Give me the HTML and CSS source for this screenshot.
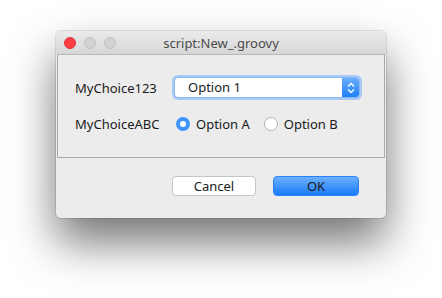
FILE: index.html
```html
<!DOCTYPE html>
<html lang="en">
<head>
  <meta charset="UTF-8">
  <title>script:New_.groovy</title>
  <link rel="stylesheet" href="styles.css">
</head>
<body>

  <div class="window">
    <div class="titlebar">
      <div class="lights">
        <span class="light red"></span>
        <span class="light"></span>
        <span class="light"></span>
      </div>
      <div class="title">script:New_.groovy</div>
    </div>

    <div class="panel">
      <div class="label">MyChoice123</div>
      <div class="combo">
        <span class="combo-text">Option 1</span>
        <span class="combo-arrows">
          <svg width="10" height="14" viewBox="0 0 10 14">
            <path d="M2 5.5 L5 2.5 L8 5.5 M2 8.5 L5 11.5 L8 8.5" fill="none" stroke="#fff" stroke-width="1.4"/>
          </svg>
        </span>
      </div>

      <div class="label">MyChoiceABC</div>
      <div class="radios">
        <label class="radio"><span class="dot on"></span>Option A</label>
        <label class="radio"><span class="dot"></span>Option B</label>
      </div>
    </div>

    <div class="buttons">
      <button class="btn">Cancel</button>
      <button class="btn ok">OK</button>
    </div>
  </div>

</body>
</html>
```

FILE: styles.css
```css
html, body { height: 100%; }
body { margin: 0; padding-top: 31px; box-sizing: border-box; background: #fff; font-family: "Noto Sans", "DejaVu Sans", sans-serif; font-size: 13px; color: #1a1a1a; }

.window {
  width: 330px; height: 187px; margin-left: 56px;
  background: #ececec; border-radius: 5px;
  box-shadow: 0 0 0 1px rgba(0,0,0,0.1), 0 24px 46px rgba(0,0,0,0.55);
  display: flex; flex-direction: column; overflow: hidden;
}

.titlebar {
  height: 23px; position: relative;
  background: linear-gradient(#ebebeb, #d6d6d6);
  display: flex; align-items: center; justify-content: center;
}
.lights { position: absolute; left: 8px; top: 6px; display: flex; gap: 8px; }
.light { width: 12px; height: 12px; border-radius: 50%; background: #d3d3d3; border: 0.5px solid #c4c4c4; box-sizing: border-box; }
.light.red { background: #fc3d44; border-color: #e1343a; }
.title { color: #4a4a4a; font-size: 13px; }

.panel {
  height: 104px; margin: 0 1px; box-sizing: border-box;
  border: 1px solid #a9a9a9; border-top-color: #b8b8b8;
  padding: 22px 0 0 17px;
  display: grid; grid-template-columns: 99px 186px; row-gap: 17px;
  align-items: center; align-content: start;
}
.label { color: #1a1a1a; }

.combo {
  height: 21px; box-sizing: border-box;
  border: 1px solid #8eb6ef; border-radius: 4px;
  box-shadow: 0 0 0 2px #a8c9f6;
  background: #fff; display: flex; align-items: stretch; overflow: hidden;
}
.combo-text { flex: 1; padding-left: 13px; line-height: 19px; }
.combo-arrows {
  width: 17px; display: flex; align-items: center; justify-content: center;
  background: linear-gradient(#6aaefc, #1f7ff8);
}

.radios { display: flex; align-items: center; gap: 14px; padding-left: 2px; }
.radio { display: flex; align-items: center; gap: 6px; }
.dot { width: 14px; height: 14px; border-radius: 50%; box-sizing: border-box; background: #fff; border: 1px solid #b2b2b2; }
.dot.on { border: 4.5px solid #3e95fb; }

.buttons { flex: 1; display: flex; justify-content: flex-end; align-items: flex-start; gap: 17px; padding: 18px 27px 0 0; }
.btn {
  height: 20px; width: 84px; padding: 0; font-family: inherit; font-size: 13px; color: #1a1a1a;
  background: #fff; border: 1px solid #c5c5c5; border-radius: 4px;
}
.btn.ok { width: 86px; border-color: #2a82f8; background: linear-gradient(#6cb0fd, #1a7bf8); }
```
